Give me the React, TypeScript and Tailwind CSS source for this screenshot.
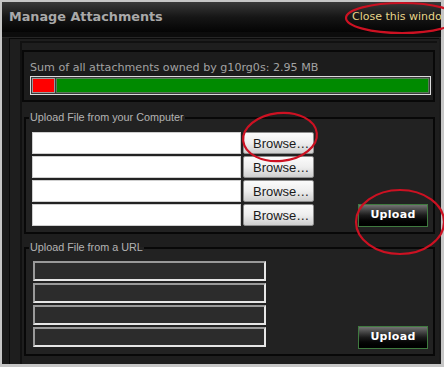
// npm modules
import React from 'react'

const fileRows = [0, 1, 2, 3]

const UploadButton = () => (
  <button className="w-[70px] h-[23px] border border-[#3f7a3f] bg-gradient-to-b from-[#747474] via-[#1a1a1a] to-[#000000] text-white font-bold text-[11px] font-['DejaVu_Sans',sans-serif] tracking-[0.3px]">
    Upload
  </button>
)

const App = (): React.JSX.Element => {
  return (
    <div className="relative w-[444px] h-[367px] bg-[#c6c6c6] pt-[2px] pl-[2px] pr-[3px] pb-[3px] font-['DejaVu_Sans',sans-serif] overflow-hidden">
      <div className="h-full flex flex-col bg-[#1a1a1a]">
        {/* title bar */}
        <header className="h-[30px] shrink-0 flex items-center justify-between pl-[7px] bg-gradient-to-b from-[#3a3a3a] via-[#161616] to-[#050505]">
          <span className="font-bold text-[12.8px] text-[#a9a9a9]">Manage Attachments</span>
          <span className="text-[11px] text-[#e7d58a] whitespace-nowrap w-[89px] overflow-hidden">
            Close this window
          </span>
        </header>
        <div className="h-[6px] shrink-0 bg-[#0c0c0c] border-b border-[#262626]" />

        {/* content */}
        <div className="flex-1 flex pl-[7px] pr-[2px]">
          <div className="flex-1 border-l border-t border-[#090909] bg-[#1e1e1e] pl-[10px] pr-[2px] pt-[2px]">
            <div className="h-full border-l-2 border-t-2 border-[#111] pt-[7px] pr-[2px]">
              {/* quota box */}
              <div className="border-2 border-[#080808] bg-[#1c1c1c] pl-[6px] pr-[2px] pt-[9px] pb-[5px]">
                <div className="text-[11.1px] leading-[13px] text-[#a3a3a3]">
                  Sum of all attachments owned by g10rg0s: 2.95 MB
                </div>
                <div className="mt-[2px] h-[19px] border border-[#dcdcdc] bg-[#3a3a3a] p-[1px] flex gap-[1px]">
                  <div className="w-[23px] bg-[#ff0000] border border-[#9a9a9a]" />
                  <div className="flex-1 bg-[#008a00] border border-[#5a7a5a]" />
                </div>
              </div>

              {/* upload from computer */}
              <fieldset className="mt-[9px] ml-[2px] border-2 border-[#080808] bg-[#222] px-[6px] pb-[6px]">
                <legend className="ml-[-3px] px-[1px] leading-[13px] text-[#b3b3b3] font-['Liberation_Sans',sans-serif] text-[10.8px]">
                  Upload File from your Computer
                </legend>
                <div className="mt-[8px] flex items-end">
                  <div className="flex flex-col gap-[2px]">
                    {fileRows.map(i => (
                      <div key={i} className="flex gap-[2px]">
                        <input type="text" className="w-[209px] h-[22px] bg-white border border-[#cfcfcf]" />
                        <button className="w-[71px] h-[22px] rounded-[2px] border border-[#8e8e8e] bg-gradient-to-b from-[#fbfbfb] via-[#eeeeee] to-[#cfcfcf] text-left pl-[9px] text-[13px] text-[#1a1a1a] font-['Liberation_Sans',sans-serif] leading-none">
                          Browse…
                        </button>
                      </div>
                    ))}
                  </div>
                  <div className="flex-1" />
                  <div className="mr-[-1px] mb-[-1px]">
                    <UploadButton />
                  </div>
                </div>
              </fieldset>

              {/* upload from url */}
              <fieldset className="mt-[7px] ml-[2px] border-2 border-[#080808] bg-[#222] px-[6px] pb-[7px]">
                <legend className="ml-[-3px] px-[1px] leading-[13px] text-[#b3b3b3] font-['Liberation_Sans',sans-serif] text-[10.8px]">
                  Upload File from a URL
                </legend>
                <div className="mt-[7px] flex items-end">
                  <div className="flex flex-col gap-[2px] pl-[1px]">
                    {fileRows.map(i => (
                      <input
                        key={i}
                        type="text"
                        className="w-[233px] h-[20px] bg-[#2c2c2c] border-2 border-t-[#9a9a9a] border-l-[#9a9a9a] border-b-[#e6e6e6] border-r-[#e6e6e6]"
                      />
                    ))}
                  </div>
                  <div className="flex-1" />
                  <div className="mr-[-1px] mb-[-2px]">
                    <UploadButton />
                  </div>
                </div>
              </fieldset>
            </div>
          </div>
        </div>
      </div>

      {/* red annotation circles */}
      <svg className="absolute inset-0 pointer-events-none" width="444" height="367">
        <ellipse cx="402" cy="18" rx="56" ry="15" fill="none" stroke="#cc1122" strokeWidth="2.2" />
        <ellipse cx="280" cy="137" rx="37" ry="24" fill="none" stroke="#cc1122" strokeWidth="2.2" transform="rotate(-6 280 137)" />
        <ellipse cx="400" cy="222" rx="44" ry="32" fill="none" stroke="#cc1122" strokeWidth="2.2" />
      </svg>
    </div>
  )
}

export default App
